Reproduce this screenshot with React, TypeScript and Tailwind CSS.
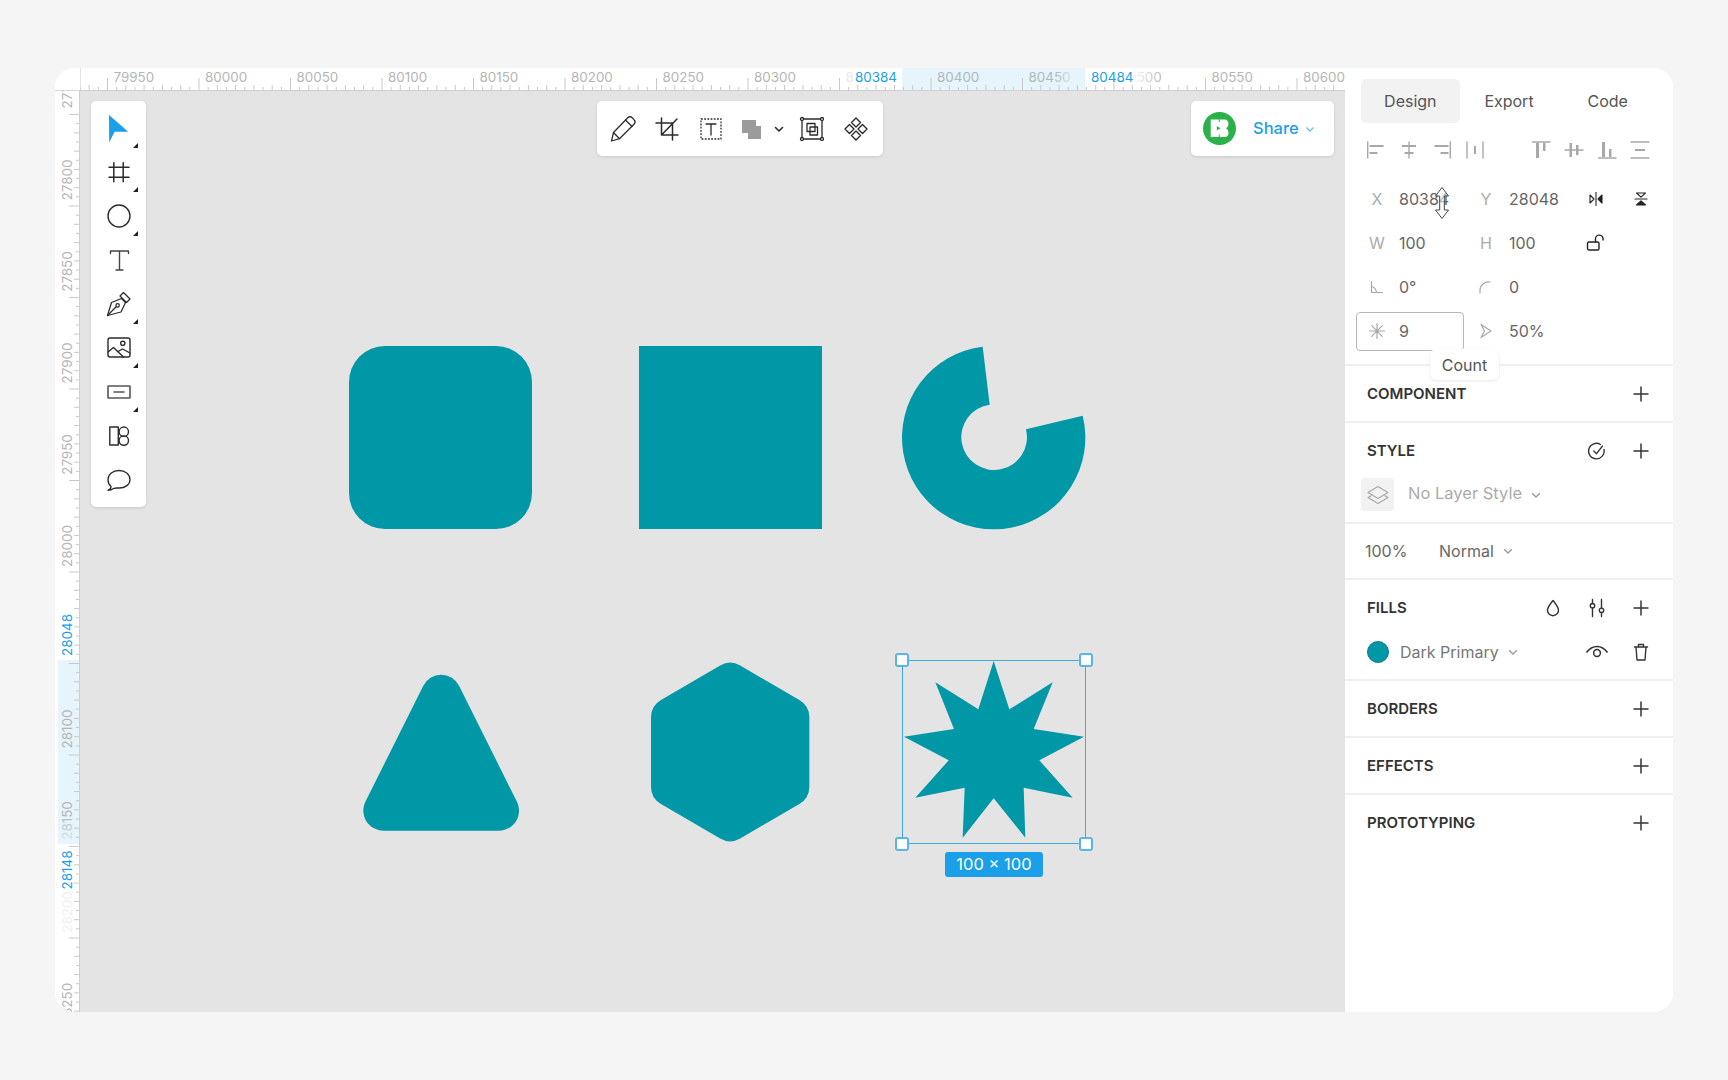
import React from "react";

const hx = (v: number) => 119 + (v - 80000) * 1.83;
const vy = (v: number) => 115 + (v - 27800) * 1.83;

function TopRuler() {
  const ticks: React.ReactNode[] = [];
  for (let v = 79900; v <= 80620; v += 5) {
    const x = hx(v);
    if (x < 0) continue;
    const len = v % 50 === 0 ? 13 : v % 10 === 0 ? 6 : 4;
    ticks.push(<line key={v} x1={x} x2={x} y1={23 - len} y2={23} stroke="#c9c9c9" strokeWidth="1" />);
  }
  const labels = [79950, 80000, 80050, 80100, 80150, 80200, 80250, 80300, 80350, 80400, 80450, 80500, 80550, 80600];
  return (
    <svg width="1265" height="23" className="block" fontSize="13.4">
      <defs>
        <linearGradient id="fadeA" x1="0" x2="1" y1="0" y2="0">
          <stop offset="0" stopColor="#e6f4fb" stopOpacity="0" />
          <stop offset="1" stopColor="#e6f4fb" stopOpacity="1" />
        </linearGradient>
        <linearGradient id="fadeB" x1="0" x2="1" y1="0" y2="0">
          <stop offset="0" stopColor="#ffffff" stopOpacity="1" />
          <stop offset="1" stopColor="#ffffff" stopOpacity="0" />
        </linearGradient>
      </defs>
      <rect x="0" y="0" width="1265" height="23" fill="#fff" />
      <rect x="822" y="0" width="183.5" height="23" fill="#e6f4fb" />
      {labels.map((v) => (
        <text
          key={v}
          x={hx(v) + 6}
          y="14"
          fill={v === 80400 || v === 80450 ? "#b0b8bc" : "#b5b5b5"}
          opacity={v === 80350 ? 0.3 : 1}
        >
          {v}
        </text>
      ))}
      <rect x="975" y="0" width="22" height="18" fill="url(#fadeA)" />
      <rect x="997" y="0" width="8.5" height="18" fill="#e6f4fb" />
      <rect x="774" y="0" width="48" height="18" fill="#fff" />
      <rect x="1005.5" y="0" width="46" height="18" fill="#fff" />
      <rect x="1051" y="0" width="32" height="18" fill="url(#fadeB)" />
      {ticks}
      <line x1="0" x2="0" y1="0" y2="23" stroke="#c9c9c9" />
      <line x1="0" x2="1265" y1="22.5" y2="22.5" stroke="#cfcfcf" />
      <text x="817" y="14" textAnchor="end" fill="#1a9fe8">80384</text>
      <text x="1011" y="14" fill="#1a9fe8">80484</text>
    </svg>
  );
}

function LeftRuler() {
  const ticks: React.ReactNode[] = [];
  for (let v = 27750; v <= 28300; v += 5) {
    const y = vy(v);
    if (y < 0 || y > 921) continue;
    const len = v % 50 === 0 ? 11 : v % 10 === 0 ? 6 : 4;
    ticks.push(<line key={v} x1={25 - len} x2={25} y1={y} y2={y} stroke="#c9c9c9" strokeWidth="1" />);
  }
  const labels = [27750, 27800, 27850, 27900, 27950, 28000, 28100, 28150, 28200, 28250];
  return (
    <svg width="25" height="921" className="block" fontSize="13.4">
      <defs>
        <linearGradient id="fadeC" x1="0" x2="0" y1="0" y2="1">
          <stop offset="0" stopColor="#e6f4fb" stopOpacity="0" />
          <stop offset="1" stopColor="#e6f4fb" stopOpacity="0.9" />
        </linearGradient>
      </defs>
      <rect x="0" y="0" width="25" height="921" fill="#fff" />
      <rect x="3" y="569" width="22" height="184" fill="#e6f4fb" />
      {labels.map((v) => {
        const cy = vy(v) - 26;
        return (
          <text
            key={v}
            x={17}
            y={cy}
            textAnchor="middle"
            transform={`rotate(-90 17 ${cy})`}
            fill="#b5b5b5"
            opacity={v === 28200 ? 0.2 : 1}
          >
            {v}
          </text>
        );
      })}
      <rect x="3" y="725" width="18" height="28" fill="url(#fadeC)" />
      {ticks}
      <line x1="24.5" x2="24.5" y1="0" y2="921" stroke="#cfcfcf" />
      <text x="17" y="544" textAnchor="middle" transform="rotate(-90 17 544)" fill="#1a9fe8">28048</text>
      <text x="17" y="779" textAnchor="middle" transform="rotate(-90 17 779)" fill="#1a9fe8">28148</text>
    </svg>
  );
}

function Ico32({ children, fill = "none", stroke = "#2b2b2b", sw = 1.4 }: { children: React.ReactNode; fill?: string; stroke?: string; sw?: number }) {
  return (
    <svg width="32" height="32" viewBox="0 0 32 32" fill={fill} stroke={stroke} strokeWidth={sw} strokeLinejoin="round" strokeLinecap="round">
      {children}
    </svg>
  );
}

function Ico20({ children, stroke = "#a8a8a8", sw = 1.4, fill = "none" }: { children: React.ReactNode; stroke?: string; sw?: number; fill?: string }) {
  return (
    <svg width="20" height="20" viewBox="0 0 20 20" fill={fill} stroke={stroke} strokeWidth={sw} strokeLinejoin="round" strokeLinecap="round">
      {children}
    </svg>
  );
}

function ToolCell({ children, corner }: { children: React.ReactNode; corner?: boolean }) {
  return (
    <div className="relative flex h-[44px] w-full items-center justify-center">
      {children}
      {corner && <div className="absolute bottom-[2px] right-[8px] h-0 w-0 border-b-[5px] border-l-[5px] border-b-[#222] border-l-transparent" />}
    </div>
  );
}

function LeftToolbar() {
  return (
    <div className="absolute left-[11px] top-[10px] flex w-[55px] flex-col rounded-[5px] bg-white py-[5px] shadow-[0_1px_3px_rgba(0,0,0,0.12)]">
      <ToolCell corner>
        <Ico32 stroke="none" fill="#1a9fe8"><path d="M6 3 L25.2 19.7 L11.6 19.7 L6.2 30.5 Z" /></Ico32>
      </ToolCell>
      <ToolCell corner>
        <Ico32 sw={1.5}><path d="M10.8 6.7V25.7M20.2 6.7V25.7M6 11.3H26M6 21.3H26" /></Ico32>
      </ToolCell>
      <ToolCell corner>
        <Ico32><circle cx="16" cy="16" r="11" /></Ico32>
      </ToolCell>
      <ToolCell>
        <Ico32 stroke="#444"><path d="M7.5 9.5V7H25.5V9.5M16.5 7V26M13 26H20" /></Ico32>
      </ToolCell>
      <ToolCell corner>
        <Ico32 sw={1.25}>
          <path d="M4.5 27.5L8.5 14.5L18.5 10.5L22.5 14.5L18 24Z" />
          <path d="M4.5 27.5L13.2 18.8" />
          <circle cx="14.6" cy="17.4" r="1.7" />
          <path d="M17 8L20.5 4.5L27 11L23.5 14.5Z" />
        </Ico32>
      </ToolCell>
      <ToolCell corner>
        <Ico32 sw={1.4}>
          <rect x="5" y="6" width="22" height="19" rx="2" />
          <circle cx="19.8" cy="11.3" r="2.1" />
          <path d="M5 20L10.5 15.5L20.5 25M15 19.5L19.5 17L27 21" />
        </Ico32>
      </ToolCell>
      <ToolCell corner>
        <Ico32 stroke="#555" sw={1.6}>
          <rect x="5" y="10" width="22" height="12" rx="0.5" />
          <path d="M11 16H21" />
        </Ico32>
      </ToolCell>
      <ToolCell>
        <Ico32 sw={1.4}>
          <rect x="6.8" y="7" width="8.5" height="18" />
          <circle cx="20.8" cy="11.7" r="4.7" />
          <circle cx="20.8" cy="20.6" r="4.7" />
        </Ico32>
      </ToolCell>
      <ToolCell>
        <Ico32 sw={1.3}>
          <path d="M8 22.5C5.8 20.6 5 18.3 5 15.5C5 10 10 6.5 16 6.5C22 6.5 27 10 27 15.5C27 20.5 22.5 24 16 24C13.8 24 12 23.8 10.5 24.5C9 25.6 7 26.3 5 26.3C6.6 25.5 8.2 24.3 8 22.5Z" />
        </Ico32>
      </ToolCell>
    </div>
  );
}

function CenterToolbar() {
  return (
    <div className="absolute left-[517px] top-[10px] flex h-[55px] w-[286px] items-center rounded-[5px] bg-white pl-[4px] shadow-[0_1px_3px_rgba(0,0,0,0.12)]">
      <div className="flex w-[44px] justify-center">
        <Ico32 sw={1.25}>
          <path d="M4.5 28L6.5 19.5L20.5 5C22 3.5 24 3.5 25.5 5L27 6.7C28.3 8 28.3 10 27 11.3L12.5 25.7Z" />
          <path d="M6.5 19.5L12.5 25.7M18.5 7L25 13.5" />
        </Ico32>
      </div>
      <div className="flex w-[44px] justify-center">
        <Ico32 sw={1.5}>
          <path d="M10.5 5V22H27M5 10H21.5V27M26 6L10.5 22" />
        </Ico32>
      </div>
      <div className="flex w-[44px] justify-center">
        <Ico32 sw={1.3}>
          <rect x="6" y="6" width="20" height="20" strokeDasharray="1.8 1.4" strokeLinecap="butt" />
          <path d="M11 11H21M16 11V22" />
        </Ico32>
      </div>
      <div className="flex w-[36px] justify-center">
        <Ico32 stroke="none" fill="#9b9b9b">
          <rect x="7" y="7" width="14" height="13" />
          <rect x="13" y="13" width="13" height="13" />
        </Ico32>
      </div>
      <div className="flex w-[20px] justify-center">
        <Ico20 stroke="#2b2b2b" sw={1.6}><path d="M6.5 8.5L10 12L13.5 8.5" /></Ico20>
      </div>
      <div className="flex w-[46px] justify-center">
        <Ico32 sw={1.3}>
          <rect x="6" y="6" width="20" height="20" />
          <circle cx="6" cy="6" r="1.5" fill="#fff" />
          <circle cx="26" cy="6" r="1.5" fill="#fff" />
          <circle cx="6" cy="26" r="1.5" fill="#fff" />
          <circle cx="26" cy="26" r="1.5" fill="#fff" />
          <rect x="11" y="10.5" width="8" height="8" />
          <rect x="14" y="14" width="7.5" height="8" />
        </Ico32>
      </div>
      <div className="flex w-[42px] justify-center">
        <Ico32 sw={1.4}>
          <path d="M16 5L20.5 9.5L16 14L11.5 9.5Z" />
          <path d="M9.5 11.5L14 16L9.5 20.5L5 16Z" />
          <path d="M22.5 11.5L27 16L22.5 20.5L18 16Z" />
          <path d="M16 18L20.5 22.5L16 27L11.5 22.5Z" />
        </Ico32>
      </div>
    </div>
  );
}

function ShareCard() {
  return (
    <div className="absolute left-[1111px] top-[10px] flex h-[55px] w-[143px] items-center rounded-[5px] bg-white pl-[12px] shadow-[0_1px_3px_rgba(0,0,0,0.12)]">
      <svg width="33" height="33" viewBox="0 0 33 33">
        <circle cx="16.5" cy="16.5" r="16.5" fill="#2bb14a" />
        <path d="M7.7 7.5H21.5C24 7.5 25.5 9.3 25.5 11.5C25.5 13.5 24.6 15.5 23 16.3C24.6 17.2 25.5 19 25.5 21C25.5 23.4 24 25 21.5 25H7.7Z" fill="#fff" />
        <path d="M13.8 14L17.5 16.3L13.8 18.6Z" fill="#2bb14a" />
        <path d="M16.3 7.5V10M16.3 22.5V25" stroke="#2bb14a" strokeWidth="1" />
      </svg>
      <span className="ml-[17px] text-[16.5px] font-medium leading-none text-[#1a9fe8]">Share</span>
      <svg width="12" height="12" viewBox="0 0 12 12" className="ml-[5px]" fill="none" stroke="#6cbdec" strokeWidth="1.3"><path d="M2.5 4.5L6 8L9.5 4.5" /></svg>
    </div>
  );
}

function Shapes() {
  return (
    <>
      <div className="absolute left-[269px] top-[255px] h-[183px] w-[183px] rounded-[36px] bg-[#0097a7]" />
      <div className="absolute left-[559px] top-[255px] h-[183px] w-[183px] bg-[#0097a7]" />
      <svg className="absolute left-[800px] top-[239px]" width="240" height="210" viewBox="0 0 720 630">
        <path d="M308 50A275 275 0 1 0 608 257L438 298A98.5 98.5 0 1 1 329 224Z" fill="#0097a7" />
      </svg>
      <svg className="absolute left-[260px] top-[549px]" width="500" height="220" viewBox="0 0 1500 660">
        <path d="M249.5 137.8A60 60 0 0 1 357.5 137.8L530.5 484.8A60 60 0 0 1 477 572L130 572A60 60 0 0 1 76.5 484.8Z" fill="#0097a7" />
        <path d="M1140.5 76.3A60 60 0 0 1 1200.5 76.3L1378 180.2A60 60 0 0 1 1408 232.1L1408 439.9A60 60 0 0 1 1378 491.8L1200.5 595.7A60 60 0 0 1 1140.5 595.7L963 491.8A60 60 0 0 1 933 439.9L933 232.1A60 60 0 0 1 963 180.2Z" fill="#0097a7" />
      </svg>
      <svg className="absolute left-[800px] top-[549px]" width="240" height="250" viewBox="0 0 720 750">
        <polygon
          points="341,63 388,208 518,127 461,267 612,290 478,361 578,473 431,443 436,593 341,475 248,593 254,443 106,473 206,361 72,290 222,267 166,127 295,208"
          fill="#0097a7"
        />
      </svg>
      <div className="absolute left-[822px] top-[569px] h-[184px] w-[184px] border-[1.5px] border-[#3fa9e8]">
        <div className="absolute left-[-8px] top-[-8px] h-[14px] w-[14px] rounded-[3px] border-2 border-[#58b5ec] bg-white" />
        <div className="absolute right-[-8px] top-[-8px] h-[14px] w-[14px] rounded-[3px] border-2 border-[#58b5ec] bg-white" />
        <div className="absolute bottom-[-8px] left-[-8px] h-[14px] w-[14px] rounded-[3px] border-2 border-[#58b5ec] bg-white" />
        <div className="absolute bottom-[-8px] right-[-8px] h-[14px] w-[14px] rounded-[3px] border-2 border-[#58b5ec] bg-white" />
      </div>
      <div className="absolute left-[865px] top-[761px] flex h-[25px] w-[98px] items-center justify-center rounded-[3px] bg-[#1a9fe8] text-[16.5px] leading-none text-white">
        100 × 100
      </div>
    </>
  );
}

function Plus() {
  return (
    <svg width="20" height="20" viewBox="0 0 20 20" fill="none" stroke="#333" strokeWidth="1.5"><path d="M10 2.5V17.5M2.5 10H17.5" /></svg>
  );
}

function Chev({ color = "#9a9a9a" }: { color?: string }) {
  return (
    <svg width="12" height="12" viewBox="0 0 12 12" fill="none" stroke={color} strokeWidth="1.3"><path d="M2.2 4.2L6 8L9.8 4.2" /></svg>
  );
}

function Tabs() {
  return (
    <div className="mx-[16px] mt-[11px] flex h-[44px] text-[16px] text-[#555]">
      <div className="flex w-[99px] items-center justify-center rounded-[5px] bg-[#f2f2f2]">Design</div>
      <div className="flex w-[99px] items-center justify-center">Export</div>
      <div className="flex w-[99px] items-center justify-center">Code</div>
    </div>
  );
}

function AlignRow() {
  const B = ({ x, y, w, h }: { x: number; y: number; w: number; h: number }) => <rect x={x} y={y} width={w} height={h} fill="#a8a8a8" stroke="none" />;
  return (
    <div className="mt-[5px] flex h-[44px] items-center pl-[21px]">
      <div className="flex gap-[13px]">
        <Ico20><path d="M1.7 2V18" /><B x={3.5} y={5} w={14} h={2} /><B x={3.5} y={12} w={8} h={2} /></Ico20>
        <Ico20><path d="M10 2V18" /><B x={3} y={5} w={14} h={2} /><B x={5.5} y={12} w={9} h={2} /></Ico20>
        <Ico20><path d="M18.3 2V18" /><B x={2.5} y={5} w={14} h={2} /><B x={8.5} y={12} w={8} h={2} /></Ico20>
        <Ico20><path d="M2 2V18M18 2V18" /><B x={9} y={6} w={2} h={8} /></Ico20>
      </div>
      <div className="ml-[46px] flex gap-[13px]">
        <Ico20><path d="M1.5 2H19" /><B x={5} y={3} w={3} h={15} /><B x={12} y={3} w={2.5} h={8} /></Ico20>
        <Ico20><path d="M1 10H19" /><B x={5.5} y={3} w={2.5} h={14} /><B x={12} y={5} w={2.5} h={10} /></Ico20>
        <Ico20><path d="M1.5 18H19" /><B x={5} y={2} w={3} h={15} /><B x={12} y={9} w={2.5} h={8} /></Ico20>
        <Ico20><path d="M1 2H19M1 18H19" /><B x={5} y={9} w={10} h={2} /></Ico20>
      </div>
    </div>
  );
}

function PropCell({ label, value, w, gap }: { label: React.ReactNode; value: string; w: string; gap: string }) {
  return (
    <div className={`flex items-center ${w}`}>
      <div className="flex w-[32px] justify-center text-[#ababab]">{label}</div>
      <div className={gap}>{value}</div>
    </div>
  );
}

function Props() {
  const Row = ({ children }: { children: React.ReactNode }) => (
    <div className="relative flex h-[44px] items-center pl-[16px] text-[16px] text-[#666]">{children}</div>
  );
  return (
    <div className="relative mt-[5px] border-b-2 border-[#efefef] pb-[11px]">
      <Row>
        <PropCell w="w-[109px]" gap="ml-[6px]" label="X" value="80384" />
        <PropCell w="w-[116px]" gap="ml-[7px]" label="Y" value="28048" />
        <div className="flex w-[45px] justify-start">
          <Ico20 stroke="#222" sw={1.1}>
            <path d="M4 6L8 10L4 14Z" />
            <path d="M10 3.5V16.5" />
            <path d="M16 6L12 10L16 14Z" fill="#222" />
          </Ico20>
        </div>
        <Ico20 stroke="#222" sw={1.1}>
          <path d="M5.5 4H14.5L10 8.2Z" />
          <path d="M4 10H16" />
          <path d="M5.5 16H14.5L10 11.8Z" fill="#222" />
        </Ico20>
      </Row>
      <Row>
        <PropCell w="w-[109px]" gap="ml-[6px]" label="W" value="100" />
        <PropCell w="w-[116px]" gap="ml-[7px]" label="H" value="100" />
        <Ico20 stroke="#222" sw={1.4}>
          <rect x="1.5" y="9" width="11.5" height="8" rx="1.5" />
          <path d="M9.5 9V6.2A3.7 3.7 0 0 1 17 5.5V7" />
        </Ico20>
      </Row>
      <Row>
        <PropCell w="w-[109px]" gap="ml-[6px]" label={<Ico20 sw={1.2}><path d="M4.5 4.5V15.5H15.5M4.5 9.5C7.5 10 9 12 9.5 15.5" /></Ico20>} value="0°" />
        <PropCell w="w-[116px]" gap="ml-[7px]" label={<Ico20 sw={1.2}><path d="M4 16V13A8.5 8.5 0 0 1 14 5" /></Ico20>} value="0" />
      </Row>
      <Row>
        <PropCell w="w-[109px]" gap="ml-[6px]" label={<Ico20 sw={1.2}><path d="M10 2.5V17.5M2.5 10H17.5M4.7 4.7L15.3 15.3M15.3 4.7L4.7 15.3" /></Ico20>} value="9" />
        <PropCell w="w-[116px]" gap="ml-[7px]" label={<Ico20 sw={1.2}><path d="M5 3.5L15 10L5 16.5L8.5 10Z" /></Ico20>} value="50%" />
        <div className="absolute left-[11px] top-[3px] h-[39px] w-[108px] rounded-[4px] border-[1.5px] border-[#b8b8b8]" />
      </Row>
      <div className="absolute left-[85px] top-[172px] flex h-[31px] w-[69px] items-center justify-center rounded-[6px] bg-white text-[16px] leading-none text-[#555] shadow-[0_1px_3px_rgba(0,0,0,0.1)]">
        Count
      </div>
      <svg className="absolute left-[89px] top-[9px]" width="16" height="34" viewBox="0 0 16 34" fill="#fff" fillOpacity="0.55" stroke="#444" strokeWidth="1" strokeLinejoin="round">
        <path d="M8 1.5L14.5 10H10.3V24H14.5L8 32.5L1.5 24H5.7V10H1.5Z" />
      </svg>
    </div>
  );
}

function Header({ title, children }: { title: string; children?: React.ReactNode }) {
  return (
    <div className="flex h-[55px] items-center justify-between px-[22px]">
      <span className="text-[15px] font-semibold leading-none text-[#333]">{title}</span>
      <div className="flex items-center">
        {children}
        <Plus />
      </div>
    </div>
  );
}

function Panel() {
  return (
    <div className="flex w-[328px] flex-col bg-white">
      <Tabs />
      <AlignRow />
      <Props />
      <div className="border-b-2 border-[#efefef]">
        <Header title="COMPONENT" />
      </div>
      <div className="border-b-2 border-[#efefef] pb-[11px]">
        <Header title="STYLE">
          <div className="mr-[24px]">
            <Ico20 stroke="#333" sw={1.3}>
              <path d="M17 8.5A7.8 7.8 0 1 1 13.5 3.5" />
              <path d="M6.8 10L9.5 12.7L15.5 5" />
            </Ico20>
          </div>
        </Header>
        <div className="flex h-[33px] items-center pl-[16px]">
          <div className="flex h-[33px] w-[33px] items-center justify-center rounded-[4px] bg-[#f2f2f2]">
            <svg width="24" height="24" viewBox="0 0 24 24" fill="none" stroke="#a8a8a8" strokeWidth="1.2" strokeLinejoin="round">
              <path d="M12 3.5L22 9.5L12 15.5L2 9.5Z" />
              <path d="M5.5 12.5L2 14.5L12 20.5L22 14.5L18.5 12.5" />
            </svg>
          </div>
          <span className="ml-[14px] pb-[2px] text-[16.5px] text-[#ababab]">No Layer Style</span>
          <span className="ml-[8px] flex"><Chev /></span>
        </div>
      </div>
      <div className="flex h-[56px] items-center border-b-2 border-[#efefef] pl-[20px] text-[16px] text-[#666]">
        <span className="w-[74px]">100%</span>
        <span>Normal</span>
        <span className="ml-[8px] flex"><Chev /></span>
      </div>
      <div className="border-b-2 border-[#efefef] pb-[10px]">
        <Header title="FILLS">
          <div className="mr-[24px]">
            <Ico20 stroke="#333" sw={1.4}>
              <path d="M10 2.5C7 6.5 4.5 9 4.5 12.2A5.5 5.5 0 0 0 15.5 12.2C15.5 9 13 6.5 10 2.5Z" />
            </Ico20>
          </div>
          <div className="mr-[24px]">
            <Ico20 stroke="#333" sw={1.4}>
              <path d="M5.5 1.5V5.5M5.5 10V18.5M14.5 1.5V10M14.5 14.5V18.5" />
              <circle cx="5.5" cy="7.7" r="2.2" />
              <circle cx="14.5" cy="12.3" r="2.2" />
            </Ico20>
          </div>
        </Header>
        <div className="flex h-[34px] items-center pl-[22px] pr-[22px]">
          <div className="h-[22px] w-[22px] rounded-full border border-[#087f8c] bg-[#0097a7]" />
          <span className="ml-[11px] text-[16px] text-[#777]">Dark Primary</span>
          <span className="ml-[8px] flex"><Chev /></span>
          <div className="ml-auto flex items-center gap-[22px]">
            <svg width="24" height="24" viewBox="0 0 24 24" fill="none" stroke="#333" strokeWidth="1.5">
              <path d="M1.5 12.5C4.5 8.5 8 6.5 12 6.5C16 6.5 19.5 8.5 22.5 12.5" />
              <circle cx="12" cy="13" r="3.4" />
            </svg>
            <Ico20 stroke="#333" sw={1.4}>
              <path d="M3.5 5H16.5M7.5 5V2.5H12.5V5M5 5L6 18H14L15 5" />
            </Ico20>
          </div>
        </div>
      </div>
      <div className="border-b-2 border-[#efefef]">
        <Header title="BORDERS" />
      </div>
      <div className="border-b-2 border-[#efefef]">
        <Header title="EFFECTS" />
      </div>
      <Header title="PROTOTYPING" />
    </div>
  );
}

export default function App() {
  return (
    <div className="flex h-[1080px] w-full justify-center overflow-hidden bg-[#f5f5f5] pt-[68px] [font-family:Inter,sans-serif]">
      <div className="flex h-[944px] w-[1618px] overflow-hidden rounded-[20px] bg-white">
        <div className="flex w-[1290px] flex-col">
          <div className="flex h-[23px]">
            <div className="h-[23px] w-[25px] border-b border-[#d8d8d8] bg-white" />
            <TopRuler />
          </div>
          <div className="flex flex-1">
            <LeftRuler />
            <div className="relative flex-1 overflow-hidden bg-[#e4e4e4]">
              <Shapes />
              <LeftToolbar />
              <CenterToolbar />
              <ShareCard />
            </div>
          </div>
        </div>
        <Panel />
      </div>
    </div>
  );
}
